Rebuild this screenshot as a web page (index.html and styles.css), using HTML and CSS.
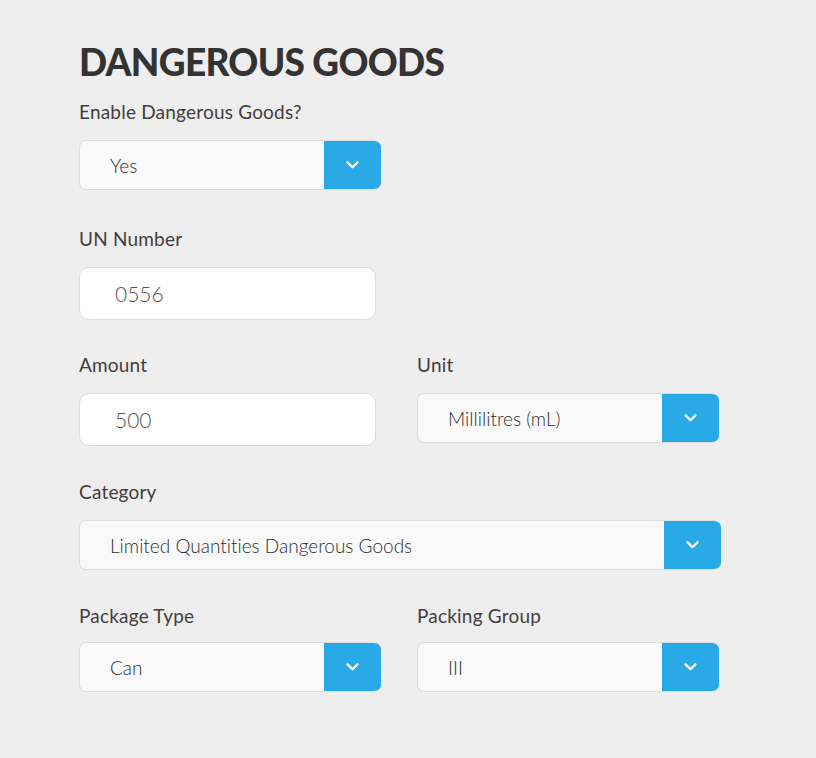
FILE: index.html
```html
<!DOCTYPE html>
<html lang="en">
<head>
<meta charset="utf-8">
<title>Dangerous Goods</title>
<link rel="stylesheet" href="styles.css">
</head>
<body>
<main class="page">
  <h1 class="title">DANGEROUS GOODS</h1>

  <div class="field f1">
    <label class="label">Enable Dangerous Goods?</label>
    <div class="select w302">
      <span class="select-value">Yes</span>
      <span class="select-btn"><svg viewBox="0 0 14 9" width="13" height="8"><path d="M1.5 1.5 L7 7 L12.5 1.5" fill="none" stroke="#fff" stroke-width="2.6" stroke-linecap="round" stroke-linejoin="round"/></svg></span>
    </div>
  </div>

  <div class="field f2">
    <label class="label">UN Number</label>
    <input class="input" type="text" value="0556">
  </div>

  <div class="row f3">
    <div class="field">
      <label class="label">Amount</label>
      <input class="input" type="text" value="500">
    </div>
    <div class="field">
      <label class="label">Unit</label>
      <div class="select w302">
        <span class="select-value">Millilitres (mL)</span>
        <span class="select-btn"><svg viewBox="0 0 14 9" width="13" height="8"><path d="M1.5 1.5 L7 7 L12.5 1.5" fill="none" stroke="#fff" stroke-width="2.6" stroke-linecap="round" stroke-linejoin="round"/></svg></span>
      </div>
    </div>
  </div>

  <div class="field f4">
    <label class="label">Category</label>
    <div class="select wfull">
      <span class="select-value">Limited Quantities Dangerous Goods</span>
      <span class="select-btn"><svg viewBox="0 0 14 9" width="13" height="8"><path d="M1.5 1.5 L7 7 L12.5 1.5" fill="none" stroke="#fff" stroke-width="2.6" stroke-linecap="round" stroke-linejoin="round"/></svg></span>
    </div>
  </div>

  <div class="row last">
    <div class="field">
      <label class="label">Package Type</label>
      <div class="select w302">
        <span class="select-value">Can</span>
        <span class="select-btn"><svg viewBox="0 0 14 9" width="13" height="8"><path d="M1.5 1.5 L7 7 L12.5 1.5" fill="none" stroke="#fff" stroke-width="2.6" stroke-linecap="round" stroke-linejoin="round"/></svg></span>
      </div>
    </div>
    <div class="field">
      <label class="label">Packing Group</label>
      <div class="select w302">
        <span class="select-value">III</span>
        <span class="select-btn"><svg viewBox="0 0 14 9" width="13" height="8"><path d="M1.5 1.5 L7 7 L12.5 1.5" fill="none" stroke="#fff" stroke-width="2.6" stroke-linecap="round" stroke-linejoin="round"/></svg></span>
      </div>
    </div>
  </div>
</main>
</body>
</html>
```

FILE: styles.css
```css
html, body {
  margin: 0;
  padding: 0;
  background: #eeeeee;
}

body {
  font-family: "Lato", "Open Sans", sans-serif;
  font-variant-ligatures: none;
  color: #463c3c;
}

.page {
  padding: 40px 0 0 79px;
  width: 642px;
}

.title {
  margin: 0 0 17px 0;
  font-size: 37px;
  line-height: 44px;
  font-weight: 900;
  color: #333333;
  letter-spacing: -0.7px;
}

.field {
  display: flex;
  flex-direction: column;
}

.f1 { margin-bottom: 38px; }
.f2 { margin-bottom: 34px; }
.f3 { margin-bottom: 35px; }
.f4 { margin-bottom: 35px; }

.row {
  display: grid;
  grid-template-columns: 302px 302px;
  column-gap: 36px;
  align-items: start;
}

.label {
  font-size: 19px;
  line-height: 22px;
  font-weight: 400;
  letter-spacing: 0.2px;
  color: #463c3c;
  margin-bottom: 17px;
}

.last .label {
  margin-bottom: 15px;
}

.select {
  display: flex;
  height: 50px;
  box-sizing: border-box;
  background: #f9f9f9;
  border: 1px solid #dcdcdc;
  border-right: none;
  border-radius: 7px;
  overflow: hidden;
}

.w302 { width: 302px; }
.wfull { width: 642px; }

.select-value {
  flex: 1;
  display: flex;
  align-items: center;
  padding-left: 30px;
  font-size: 19px;
  font-weight: 300;
  color: #2e2e2e;
}

.select-btn {
  width: 57px;
  margin: -1px 0;
  background: #29a9e6;
  display: flex;
  align-items: center;
  justify-content: center;
}

.input {
  width: 297px;
  height: 53px;
  box-sizing: border-box;
  border: 1px solid #dcdcdc;
  border-radius: 10px;
  background: #ffffff;
  padding: 0 0 0 35px;
  font-family: "Lato", "Open Sans", sans-serif;
  font-variant-ligatures: none;
  font-size: 21px;
  font-weight: 300;
  color: #555555;
  outline: none;
}
```
